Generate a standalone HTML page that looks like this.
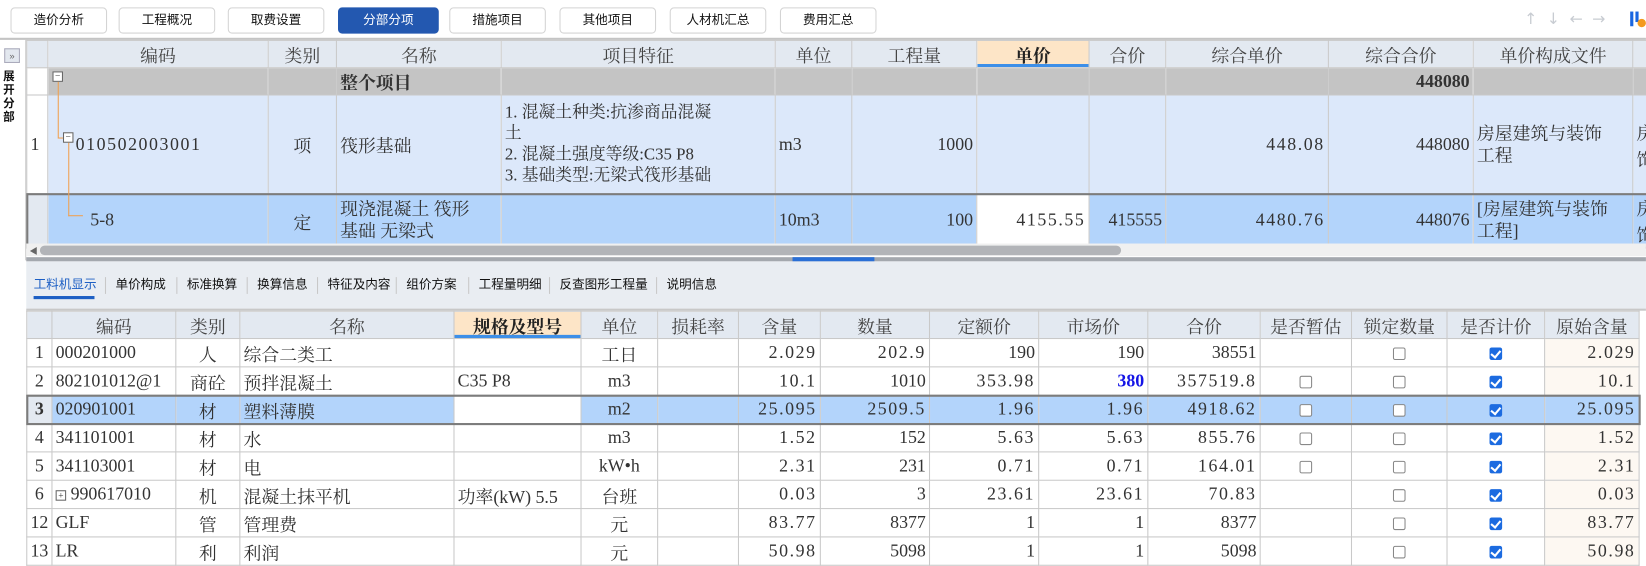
<!DOCTYPE html>
<html><head><meta charset="utf-8">
<style>
*{box-sizing:border-box;margin:0;padding:0}
html,body{width:1646px;height:564px;overflow:hidden;background:#fff}
#root{position:absolute;left:0;top:0;width:1568px;height:537px;transform:scale(1.0497);transform-origin:0 0;font-family:"Liberation Serif","Noto Serif CJK SC",serif;color:#333}
.abs{position:absolute}
.btn{position:absolute;top:7px;height:25px;width:92px;border:1px solid #d4d4d4;border-radius:4px;font:12px "Liberation Sans","Noto Sans CJK SC",sans-serif;color:#111;text-align:center;line-height:23px;background:#fff}
.btn.on{background:#2358b0;border-color:#2358b0;color:#fff}
table{border-collapse:collapse;table-layout:fixed;position:absolute}
td{border:1px solid #c9c9c9;font-size:17px;white-space:nowrap;overflow:hidden;padding:0 3px;vertical-align:middle}
th{border:1px solid #c9c9c9;background:#e3e9f1;font-weight:normal;font-size:17px;color:#444;white-space:nowrap;overflow:hidden;height:24px}
th.hl{background:#fde5c7;font-weight:bold;color:#222;box-shadow:inset 0 -3px 0 #3d8fe8}
.r{text-align:right}.c{text-align:center}
.cb{display:inline-block;width:12px;height:12px;border:1px solid #888;border-radius:2px;background:#fff;vertical-align:middle}
.ck{display:inline-block;width:12px;height:12px;border-radius:2px;background:#1c6be0;vertical-align:middle;position:relative}
.ck:after{content:"";position:absolute;left:3px;top:1px;width:4px;height:7px;border:solid #fff;border-width:0 2px 2px 0;transform:rotate(40deg)}
.tab{position:absolute;top:262px;font:12px "Liberation Sans","Noto Sans CJK SC",sans-serif;color:#111}
.sep{position:absolute;top:264px;width:1px;height:16px;background:#c8c8c8}
.sp{letter-spacing:1.5px}
</style></head><body><div id="root">
<div class="btn" style="left:10px">造价分析</div>
<div class="btn" style="left:113px">工程概况</div>
<div class="btn" style="left:217px">取费设置</div>
<div class="btn on" style="left:322px;width:96px">分部分项</div>
<div class="btn" style="left:428px">措施项目</div>
<div class="btn" style="left:533px">其他项目</div>
<div class="btn" style="left:638px">人材机汇总</div>
<div class="btn" style="left:743px">费用汇总</div>
<div class="abs" style="left:1452px;top:9px;font:15px 'DejaVu Sans',sans-serif;color:#c8ccd2;letter-spacing:9px">↑↓←→</div>
<div class="abs" style="left:1553px;top:11px;width:3px;height:14px;background:#1a66e0"></div>
<div class="abs" style="left:1558px;top:11px;width:3px;height:10px;background:#1a66e0"></div>
<div class="abs" style="left:1560px;top:18px;width:8px;height:8px;border-radius:50%;background:#f39a1e"></div>
<div class="abs" style="left:0;top:36px;width:1568px;height:2px;background:#c4c4c4"></div>
<div class="abs" style="left:4px;top:46px;width:15px;height:14px;border:1px solid #aab;background:#e3e8ef;font:9px sans-serif;color:#666;text-align:center;line-height:12px">»</div>
<div class="abs" style="left:3px;top:66px;width:16px;font:bold 11px 'Noto Sans CJK SC',sans-serif;line-height:13px;color:#111">展<br>开<br>分<br>部</div>
<div class="abs" style="left:24px;top:38px;width:1px;height:210px;background:#ccc"></div>
<table style="left:25px;top:38px;width:1563px">
<colgroup><col style="width:20px"><col style="width:210px"><col style="width:65px"><col style="width:157px"><col style="width:261px"><col style="width:73px"><col style="width:119px"><col style="width:107px"><col style="width:73px"><col style="width:155px"><col style="width:138px"><col style="width:152px"><col style="width:33px"></colgroup>
<tr><th></th><th>编码</th><th>类别</th><th>名称</th><th>项目特征</th><th>单位</th><th>工程量</th><th class="hl">单价</th><th>合价</th><th>综合单价</th><th>综合合价</th><th>单价构成文件</th><th></th></tr>
<tr style="height:25px;background:#c4c4c4"><td style="background:#fff"></td><td></td><td></td><td style="font-weight:bold">整个项目</td><td></td><td></td><td></td><td></td><td></td><td></td><td class="r" style="font-weight:bold">448080</td><td></td><td></td></tr>
<tr style="height:94px;background:#dce8fa"><td style="background:#fff">1</td><td style="padding-left:26px" class="sp">010502003001</td><td class="c">项</td><td>筏形基础</td><td style="font-size:16px;line-height:20px;white-space:normal">1. 混凝土种类:抗渗商品混凝<br>土<br>2. 混凝土强度等级:C35 P8<br>3. 基础类型:无梁式筏形基础</td><td>m3</td><td class="r">1000</td><td></td><td></td><td class="r sp">448.08</td><td class="r">448080</td><td style="line-height:21px;white-space:normal">房屋建筑与装饰<br>工程</td><td>房<br>饰</td></tr>
<tr style="height:48px;background:#b3d4fb;outline:2px solid #7c7c7c;outline-offset:-1px"><td style="background:#e3e9f1"></td><td style="padding-left:40px">5-8</td><td class="c">定</td><td style="line-height:21px;white-space:normal">现浇混凝土 筏形<br>基础 无梁式</td><td></td><td>10m3</td><td class="r">100</td><td class="r sp" style="background:#fff">4155.55</td><td class="r">415555</td><td class="r sp">4480.76</td><td class="r">448076</td><td style="line-height:21px">[房屋建筑与装饰<br>工程]</td><td>房<br>饰</td></tr>
</table>
<div class="abs" style="left:50px;top:68px;width:10px;height:10px;border:1px solid #666;background:#fff;font-size:9px;line-height:7px;text-align:center">−</div>
<div class="abs" style="left:55px;top:78px;width:1px;height:53px;background:#f0a050"></div>
<div class="abs" style="left:55px;top:131px;width:5px;height:1px;background:#f0a050"></div>
<div class="abs" style="left:60px;top:126px;width:10px;height:10px;border:1px solid #666;background:#fff;font-size:9px;line-height:7px;text-align:center">−</div>
<div class="abs" style="left:65px;top:136px;width:1px;height:70px;background:#f0a050"></div>
<div class="abs" style="left:65px;top:205px;width:14px;height:1px;background:#f0a050"></div>
<div class="abs" style="left:25px;top:232px;width:1543px;height:12px;background:#f0f0f0"></div>
<div class="abs" style="left:28px;top:234px;font-size:8px;color:#666">◀</div>
<div class="abs" style="left:38px;top:234px;width:1030px;height:9px;border-radius:5px;background:#b2b4b8"></div>
<div class="abs" style="left:25px;top:245px;width:1543px;height:4px;background:#a4a8ae"></div>
<div class="abs" style="left:755px;top:245px;width:78px;height:4px;background:#2a6fd6"></div>
<div class="abs" style="left:25px;top:249px;width:1543px;height:45px;background:#e9edf2"></div>
<div class="tab" style="left:32px;color:#1d5fc4">工料机显示</div>
<div class="abs" style="left:32px;top:282px;width:58px;height:3px;background:#1d5fc4"></div>
<div class="sep" style="left:100px"></div><div class="tab" style="left:110px">单价构成</div>
<div class="sep" style="left:168px"></div><div class="tab" style="left:178px">标准换算</div>
<div class="sep" style="left:235px"></div><div class="tab" style="left:245px">换算信息</div>
<div class="sep" style="left:302px"></div><div class="tab" style="left:312px">特征及内容</div>
<div class="sep" style="left:377px"></div><div class="tab" style="left:387px">组价方案</div>
<div class="sep" style="left:446px"></div><div class="tab" style="left:456px">工程量明细</div>
<div class="sep" style="left:523px"></div><div class="tab" style="left:533px">反查图形工程量</div>
<div class="sep" style="left:625px"></div><div class="tab" style="left:635px">说明信息</div>
<div class="abs" style="left:25px;top:294px;width:1543px;height:2px;background:#c8c8c8"></div>
<table style="left:25px;top:296px;width:1536px">
<colgroup><col style="width:24px"><col style="width:118px"><col style="width:61px"><col style="width:204px"><col style="width:121px"><col style="width:73px"><col style="width:77px"><col style="width:78px"><col style="width:104px"><col style="width:104px"><col style="width:104px"><col style="width:107px"><col style="width:87px"><col style="width:91px"><col style="width:93px"><col style="width:90px"></colgroup>
<tr><th style="height:21px"></th><th>编码</th><th>类别</th><th>名称</th><th class="hl">规格及型号</th><th>单位</th><th>损耗率</th><th>含量</th><th>数量</th><th>定额价</th><th>市场价</th><th>合价</th><th>是否暂估</th><th>锁定数量</th><th>是否计价</th><th>原始含量</th></tr>
<tr style="height:27px"><td class="c" style="padding:0">1</td><td>000201000</td><td class="c">人</td><td>综合二类工</td><td></td><td class="c">工日</td><td></td><td class="r sp">2.029</td><td class="r sp">202.9</td><td class="r">190</td><td class="r">190</td><td class="r">38551</td><td></td><td class="c"><span class="cb"></span></td><td class="c"><span class="ck"></span></td><td class="r sp" style="background:#fdf8f2">2.029</td></tr>
<tr style="height:27px"><td class="c" style="padding:0">2</td><td>802101012@1</td><td class="c">商砼</td><td>预拌混凝土</td><td>C35 P8</td><td class="c">m3</td><td></td><td class="r sp">10.1</td><td class="r">1010</td><td class="r sp">353.98</td><td class="r" style="color:#1414e6;font-weight:bold">380</td><td class="r sp">357519.8</td><td class="c"><span class="cb"></span></td><td class="c"><span class="cb"></span></td><td class="c"><span class="ck"></span></td><td class="r sp" style="background:#fdf8f2">10.1</td></tr>
<tr style="height:27px;background:#b3d4fb;outline:2px solid #7c7c7c;outline-offset:-1px"><td class="c" style="padding:0;background:#e3e9f1;font-weight:bold">3</td><td>020901001</td><td class="c">材</td><td>塑料薄膜</td><td style="background:#fff"></td><td class="c">m2</td><td></td><td class="r sp">25.095</td><td class="r sp">2509.5</td><td class="r sp">1.96</td><td class="r sp">1.96</td><td class="r sp">4918.62</td><td class="c"><span class="cb"></span></td><td class="c"><span class="cb"></span></td><td class="c"><span class="ck"></span></td><td class="r sp">25.095</td></tr>
<tr style="height:27px"><td class="c" style="padding:0">4</td><td>341101001</td><td class="c">材</td><td>水</td><td></td><td class="c">m3</td><td></td><td class="r sp">1.52</td><td class="r">152</td><td class="r sp">5.63</td><td class="r sp">5.63</td><td class="r sp">855.76</td><td class="c"><span class="cb"></span></td><td class="c"><span class="cb"></span></td><td class="c"><span class="ck"></span></td><td class="r sp" style="background:#fdf8f2">1.52</td></tr>
<tr style="height:27px"><td class="c" style="padding:0">5</td><td>341103001</td><td class="c">材</td><td>电</td><td></td><td class="c" style="padding:0">kW•h</td><td></td><td class="r sp">2.31</td><td class="r">231</td><td class="r sp">0.71</td><td class="r sp">0.71</td><td class="r sp">164.01</td><td class="c"><span class="cb"></span></td><td class="c"><span class="cb"></span></td><td class="c"><span class="ck"></span></td><td class="r sp" style="background:#fdf8f2">2.31</td></tr>
<tr style="height:27px"><td class="c" style="padding:0">6</td><td><span style="display:inline-block;width:10px;height:10px;border:1px solid #666;font-size:9px;line-height:8px;text-align:center;vertical-align:middle">+</span> 990617010</td><td class="c">机</td><td>混凝土抹平机</td><td>功率(kW) 5.5</td><td class="c">台班</td><td></td><td class="r sp">0.03</td><td class="r">3</td><td class="r sp">23.61</td><td class="r sp">23.61</td><td class="r sp">70.83</td><td></td><td class="c"><span class="cb"></span></td><td class="c"><span class="ck"></span></td><td class="r sp" style="background:#fdf8f2">0.03</td></tr>
<tr style="height:27px"><td class="c" style="padding:0">12</td><td>GLF</td><td class="c">管</td><td>管理费</td><td></td><td class="c">元</td><td></td><td class="r sp">83.77</td><td class="r">8377</td><td class="r">1</td><td class="r">1</td><td class="r">8377</td><td></td><td class="c"><span class="cb"></span></td><td class="c"><span class="ck"></span></td><td class="r sp" style="background:#fdf8f2">83.77</td></tr>
<tr style="height:27px"><td class="c" style="padding:0">13</td><td>LR</td><td class="c">利</td><td>利润</td><td></td><td class="c">元</td><td></td><td class="r sp">50.98</td><td class="r">5098</td><td class="r">1</td><td class="r">1</td><td class="r">5098</td><td></td><td class="c"><span class="cb"></span></td><td class="c"><span class="ck"></span></td><td class="r sp" style="background:#fdf8f2">50.98</td></tr>
</table>
</div></body></html>
